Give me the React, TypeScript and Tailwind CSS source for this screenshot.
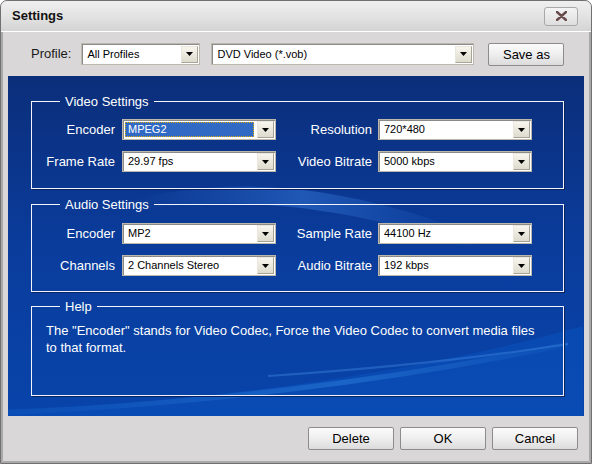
import React from 'react';

const FONT = { fontFamily: '"Liberation Sans", Arial, sans-serif' };

// Dropdown arrow button, win-xp style
function Arrow() {
  return (
    <div className="m-[1px] flex h-[17px] w-[17px] shrink-0 items-center justify-center border border-[#e9e7dc] border-r-[#a8a496] border-b-[#a8a496] bg-gradient-to-b from-[#f7f6ee] to-[#dedace]">
      <svg width="7" height="4" viewBox="0 0 7 4">
        <path d="M0 0h7L3.5 4z" fill="#000" />
      </svg>
    </div>
  );
}

function Select({ value, w, h = 'h-[21px]', focused = false }: { value: string; w: string; h?: string; focused?: boolean }) {
  return (
    <div className={`flex ${w} ${h} shrink-0 items-center border border-[#bcb8ab] bg-white shadow-[inset_1px_1px_0_#8a8a8a]`}>
      <div className="flex h-full min-w-0 flex-1 items-center p-[2px]">
        {focused ? (
          <div className="flex h-full w-full items-center border border-dotted border-[#e0b000] bg-[#316ac5] pl-[2px] text-[11px] text-white">
            {value}
          </div>
        ) : (
          <span className="pl-[3px] text-[11px] text-black">{value}</span>
        )}
      </div>
      <Arrow />
    </div>
  );
}

function Row({ l1, v1, l2, v2, focused = false }: { l1: string; v1: string; l2: string; v2: string; focused?: boolean }) {
  return (
    <div className="flex items-center text-[13px] text-white">
      <div className="w-[83px] text-right">{l1}</div>
      <div className="ml-[7px]">
        <Select value={v1} w="w-[154px]" focused={focused} />
      </div>
      <div className="w-[96px] text-right">{l2}</div>
      <div className="ml-[6px]">
        <Select value={v2} w="w-[154px]" />
      </div>
    </div>
  );
}

function Group({ title, className, children }: { title: string; className: string; children: React.ReactNode }) {
  return (
    <fieldset className={`mr-[20px] ml-[23px] border border-[#f2f4fa] shadow-[1px_1px_0_#0a2260] ${className}`}>
      <legend className="ml-[28px] px-[5px] text-[13px] leading-[15px] text-white">{title}</legend>
      {children}
    </fieldset>
  );
}

function Button({ label, w }: { label: string; w: string }) {
  return (
    <button className={`${w} h-[23px] rounded-[2px] border border-[#8c8c8c] bg-gradient-to-b from-[#fbfbfb] via-[#eeeeee] to-[#dcdcdc] text-[13px] text-black`}>
      {label}
    </button>
  );
}

export default function App() {
  return (
    <div className="h-[466px] w-[592px] bg-white" style={FONT}>
      <div className="flex h-[464px] w-[592px] flex-col overflow-hidden rounded-t-[7px] border border-[#707070] bg-[#d9d7d7] shadow-[inset_2px_0_0_#a9a9a9,inset_-2px_0_0_#a9a9a9,inset_0_-2px_0_#a9a9a9]">
        {/* Title bar */}
        <div className="flex h-[31px] shrink-0 items-center justify-between border-b border-white bg-gradient-to-b from-[#efefef] via-[#e3e3e3] to-[#d4d4d4] pr-[13px] pl-[11px]">
          <span className="text-[13px] font-bold text-[#111]">Settings</span>
          <div className="flex h-[19px] w-[34px] items-center justify-center rounded-[3px] border border-[#a8a8a8] bg-gradient-to-b from-[#f4f4f4] to-[#dedede]">
            <svg width="11" height="10" viewBox="0 0 11 10">
              <path d="M1 1l9 8M10 1L1 9" stroke="#6a4b4b" strokeWidth="2.4" strokeLinecap="round" />
            </svg>
          </div>
        </div>

        {/* Profile row */}
        <div className="flex h-[44px] shrink-0 items-center pl-[30px]">
          <span className="text-[13px] text-[#1a1a1a]">Profile:</span>
          <div className="ml-[10px]">
            <Select value="All Profiles" w="w-[119px]" h="h-[22px]" />
          </div>
          <div className="ml-[11px]">
            <Select value="DVD Video (*.vob)" w="w-[263px]" h="h-[22px]" />
          </div>
          <div className="ml-[14px]">
            <Button label="Save as" w="w-[76px]" />
          </div>
        </div>

        {/* Blue panel */}
        <div className="relative mx-[7px] h-[340px] shrink-0 overflow-hidden bg-gradient-to-b from-[#0b2e7a] via-[#0a3c9c] to-[#0844aa]">
          <svg className="absolute inset-0" width="575" height="340" viewBox="0 0 575 340">
            <defs>
              <linearGradient id="lw" x1="0" y1="0" x2="1" y2="0">
                <stop offset="0" stopColor="#1a66c8" stopOpacity="0.15" />
                <stop offset="0.6" stopColor="#2a7ad8" stopOpacity="0.55" />
                <stop offset="1" stopColor="#1a66c8" stopOpacity="0.2" />
              </linearGradient>
              <linearGradient id="up" x1="0" y1="0" x2="1" y2="0">
                <stop offset="0" stopColor="#2d6fd0" stopOpacity="0" />
                <stop offset="0.5" stopColor="#3a7fe0" stopOpacity="0.45" />
                <stop offset="1" stopColor="#2d6fd0" stopOpacity="0" />
              </linearGradient>
            </defs>
            <path d="M120 125 C 220 100, 330 105, 470 160 L 470 175 C 330 125, 220 120, 120 135 Z" fill="url(#up)" />
            <path d="M0 340 L0 334 C 160 328, 380 305, 575 250 L575 340 Z" fill="#0a4fb8" opacity="0.7" />
            <path d="M0 336 C 170 330, 380 306, 560 268" stroke="url(#lw)" strokeWidth="5" fill="none" />
            <path d="M260 300 C 380 292, 470 282, 560 268" stroke="#4a94ea" strokeOpacity="0.35" strokeWidth="2" fill="none" />
          </svg>

          <div className="relative flex flex-col">
            <Group title="Video Settings" className="mt-[18px] pt-[10px] pb-[16px]">
              <div className="flex flex-col gap-[11px]">
                <Row l1="Encoder" v1="MPEG2" l2="Resolution" v2="720*480" focused />
                <Row l1="Frame Rate" v1="29.97 fps" l2="Video Bitrate" v2="5000 kbps" />
              </div>
            </Group>
            <Group title="Audio Settings" className="mt-[8px] pt-[11px] pb-[15px]">
              <div className="flex flex-col gap-[11px]">
                <Row l1="Encoder" v1="MP2" l2="Sample Rate" v2="44100 Hz" />
                <Row l1="Channels" v1="2 Channels Stereo" l2="Audio Bitrate" v2="192 kbps" />
              </div>
            </Group>
            <Group title="Help" className="mt-[7px] h-[97px] pt-[8px]">
              <p className="ml-[14px] max-w-[500px] text-[13px] leading-[17px] text-white">
                The "Encoder" stands for Video Codec, Force the Video Codec to convert media files to that format.
              </p>
            </Group>
          </div>
        </div>

        {/* Buttons */}
        <div className="flex shrink-0 justify-end gap-[6px] pt-[11px] pr-[13px]">
          <Button label="Delete" w="w-[86px]" />
          <Button label="OK" w="w-[86px]" />
          <Button label="Cancel" w="w-[86px]" />
        </div>
      </div>
    </div>
  );
}
